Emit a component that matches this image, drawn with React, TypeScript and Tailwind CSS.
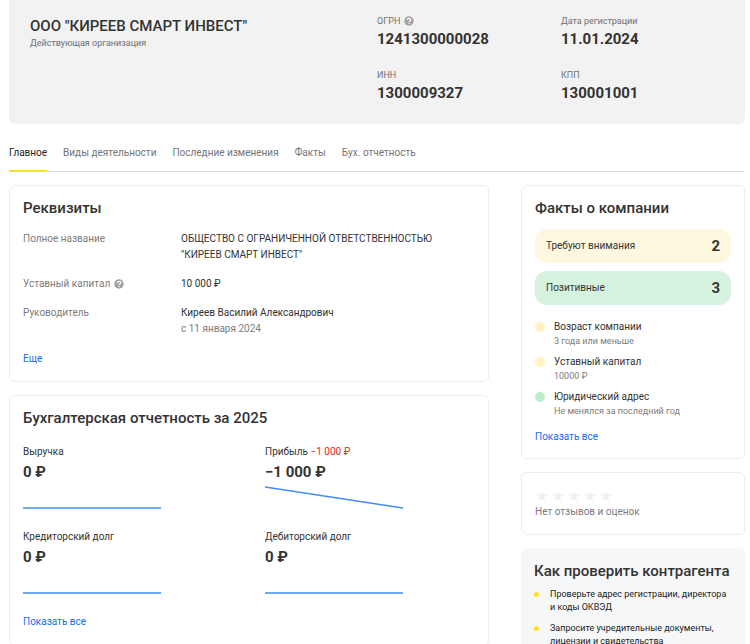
import type { ReactNode } from "react";

function HelpIcon({ label }: { label: string }) {
  return (
    <button type="button" aria-label={label} className="inline-flex align-middle">
      <svg width="10" height="10" viewBox="0 0 20 20" aria-hidden="true">
        <circle cx="10" cy="10" r="9.500" fill="#a3a3a3" />
        <path d="M6.800 8c0-2 1.400-3.200 3.300-3.200S13.400 6 13.400 7.700c0 2.300-3.200 2.300-3.200 4.300" fill="none" stroke="#fff" strokeWidth="2.400" />
        <circle cx="10.200" cy="14.800" r="1.400" fill="#fff" />
      </svg>
    </button>
  );
}

function Card({ title, children }: { title?: string; children: ReactNode }) {
  return (
    <section className="rounded-md border border-[#ececf0] bg-white p-[13px]">
      {title && <h2 className="-mt-px text-[15px] leading-5 font-medium whitespace-nowrap">{title}</h2>}
      {children}
    </section>
  );
}

function HeaderItem({ label, value, help }: { label: string; value: string; help?: boolean }) {
  return (
    <div>
      <dt className="flex items-center gap-1 text-[9px] leading-4 text-[#707070]">
        {label}
        {help && <HelpIcon label="Что такое ОГРН" />}
      </dt>
      <dd className="text-[15px] leading-5 font-bold">{value}</dd>
    </div>
  );
}

function Row({ label, help, children }: { label: string; help?: boolean; children: ReactNode }) {
  return (
    <div className="flex">
      <dt className="flex w-[158px] shrink-0 items-center gap-1 self-start text-[#7c7c7c]">
        {label}
        {help && <HelpIcon label="Что такое уставный капитал" />}
      </dt>
      <dd>{children}</dd>
    </div>
  );
}

function Metric({ label, value, delta, points }: { label: string; value: string; delta?: string; points: string }) {
  return (
    <div>
      <p>
        {label} {delta && <span className="text-[#f52222]">{delta}</span>}
      </p>
      <p className="mt-[2px] text-[15px] leading-5 font-bold">{value}</p>
      <svg width="138" height="24" viewBox="0 0 138 24" className="mt-1" aria-hidden="true">
        <polyline points={points} fill="none" stroke="#428bf9" strokeWidth="1.500" />
      </svg>
    </div>
  );
}

const tabs = ["Главное", "Виды деятельности", "Последние изменения", "Факты", "Бух. отчетность"];

const facts = [
  { title: "Возраст компании", note: "3 года или меньше", dot: "bg-[#fff3c4]" },
  { title: "Уставный капитал", note: "10000 ₽", dot: "bg-[#fff3c4]" },
  { title: "Юридический адрес", note: "Не менялся за последний год", dot: "bg-[#bdeccb]" },
];

const tips = [
  "Проверьте адрес регистрации, директора и\u00a0коды ОКВЭД",
  "Запросите учредительные документы, лицензии и\u00a0свидетельства",
];

export default function App() {
  return (
    <div className="h-screen overflow-hidden bg-white pr-[5px] pl-[9px] font-[Roboto,sans-serif] text-[10px] leading-4 text-[#333]">
      <header className="flex rounded-b-md bg-[#f2f2f2] pt-[13px] pb-[21px] pl-[21px]">
        <div className="flex-1 pt-[3px]">
          <h1 className="text-[15px] leading-5 font-medium">ООО "КИРЕЕВ СМАРТ ИНВЕСТ"</h1>
          <p className="text-[9px] leading-[14px] text-[#707070]">Действующая организация</p>
        </div>
        <dl className="grid w-[368px] grid-cols-2 gap-y-[18px]">
          <HeaderItem label="ОГРН" value="1241300000028" help />
          <HeaderItem label="Дата регистрации" value="11.01.2024" />
          <HeaderItem label="ИНН" value="1300009327" />
          <HeaderItem label="КПП" value="130001001" />
        </dl>
      </header>

      <nav className="mt-[21px] flex gap-4 border-b border-[#dedede]">
        {tabs.map((tab, i) => (
          <a
            key={tab}
            href="#"
            className={
              i === 0
                ? "-mb-px border-b-2 border-[#ffdd2d] pb-[9px] text-[#222]"
                : "pb-[9px] text-[#757575]"
            }
          >
            {tab}
          </a>
        ))}
      </nav>

      <main className="mt-[13px] flex items-start gap-8">
        <div className="flex min-w-0 flex-1 flex-col gap-[13px]">
          <Card title="Реквизиты">
            <dl className="mt-[13px] flex flex-col gap-[13px]">
              <Row label="Полное название">
                ОБЩЕСТВО С ОГРАНИЧЕННОЙ ОТВЕТСТВЕННОСТЬЮ
                <br />
                "КИРЕЕВ СМАРТ ИНВЕСТ"
              </Row>
              <Row label="Уставный капитал" help>10 000 ₽</Row>
              <Row label="Руководитель">
                Киреев Василий Александрович
                <span className="block text-[#7c7c7c]">с 11 января 2024</span>
              </Row>
            </dl>
            <a href="#" className="mt-[14px] mb-px block text-[#126df7]">Еще</a>
          </Card>
          <Card title="Бухгалтерская отчетность за 2025">
            <div className="mt-4 grid grid-cols-2 gap-x-8 gap-y-[19px]">
              <Metric label="Выручка" value="0 ₽" points="0,22 138,22" />
              <Metric label="Прибыль" delta="−1 000 ₽" value="−1 000 ₽" points="0,1 138,22" />
              <Metric label="Кредиторский долг" value="0 ₽" points="0,22 138,22" />
              <Metric label="Дебиторский долг" value="0 ₽" points="0,22 138,22" />
            </div>
            <a href="#" className="mt-[19px] mb-[2px] block text-[#126df7]">Показать все</a>
          </Card>
        </div>

        <aside className="flex w-56 shrink-0 flex-col gap-[13px]">
          <Card title="Факты о компании">
            <div className="mt-[11px] flex flex-col gap-2">
              <button type="button" className="flex h-[34px] items-center justify-between rounded-xl bg-[#fff8e0] px-[11px]">
                Требуют внимания <span className="text-[15px] font-bold">2</span>
              </button>
              <button type="button" className="flex h-[34px] items-center justify-between rounded-xl bg-[#d6f3df] px-[11px]">
                Позитивные <span className="text-[15px] font-bold">3</span>
              </button>
            </div>
            <ul className="mt-[14px] flex flex-col gap-[7px]">
              {facts.map((f) => (
                <li key={f.title} className="flex gap-[9px]">
                  <span className={"mt-[3px] size-[10px] rounded-full " + f.dot} />
                  <div>
                    <p>{f.title}</p>
                    <p className="text-[9px] leading-3 text-[#7c7c7c]">{f.note}</p>
                  </div>
                </li>
              ))}
            </ul>
            <a href="#" className="mt-3 block text-[#126df7]">Показать все</a>
          </Card>

          <Card>
            <div className="flex gap-1 pt-1 pl-px" role="img" aria-label="Нет оценок">
              {[1, 2, 3, 4, 5].map((n) => (
                <svg key={n} width="12" height="12" viewBox="0 0 24 24" fill="#eceef4">
                  <path d="M12 1l2.800 8H23l-6.600 5 2.500 8.300L12 17.300 5.100 22.300 7.600 14 1 9h8.200z" />
                </svg>
              ))}
            </div>
            <p className="mt-[2px] mb-px text-[#7c7c7c]">Нет отзывов и оценок</p>
          </Card>

          <section className="rounded-md bg-[#f6f7f8] p-[13px]">
            <h2 className="text-[15px] leading-5 font-medium whitespace-nowrap">Как проверить контрагента</h2>
            <ul className="mt-[7px] flex flex-col gap-2">
              {tips.map((tip) => (
                <li key={tip} className="flex gap-[11px] text-[9px] leading-[13px] text-[#222]">
                  <span className="mt-1 size-[5px] shrink-0 rounded-full bg-[#ffdd2d]" />
                  {tip}
                </li>
              ))}
            </ul>
          </section>
        </aside>
      </main>
    </div>
  );
}
